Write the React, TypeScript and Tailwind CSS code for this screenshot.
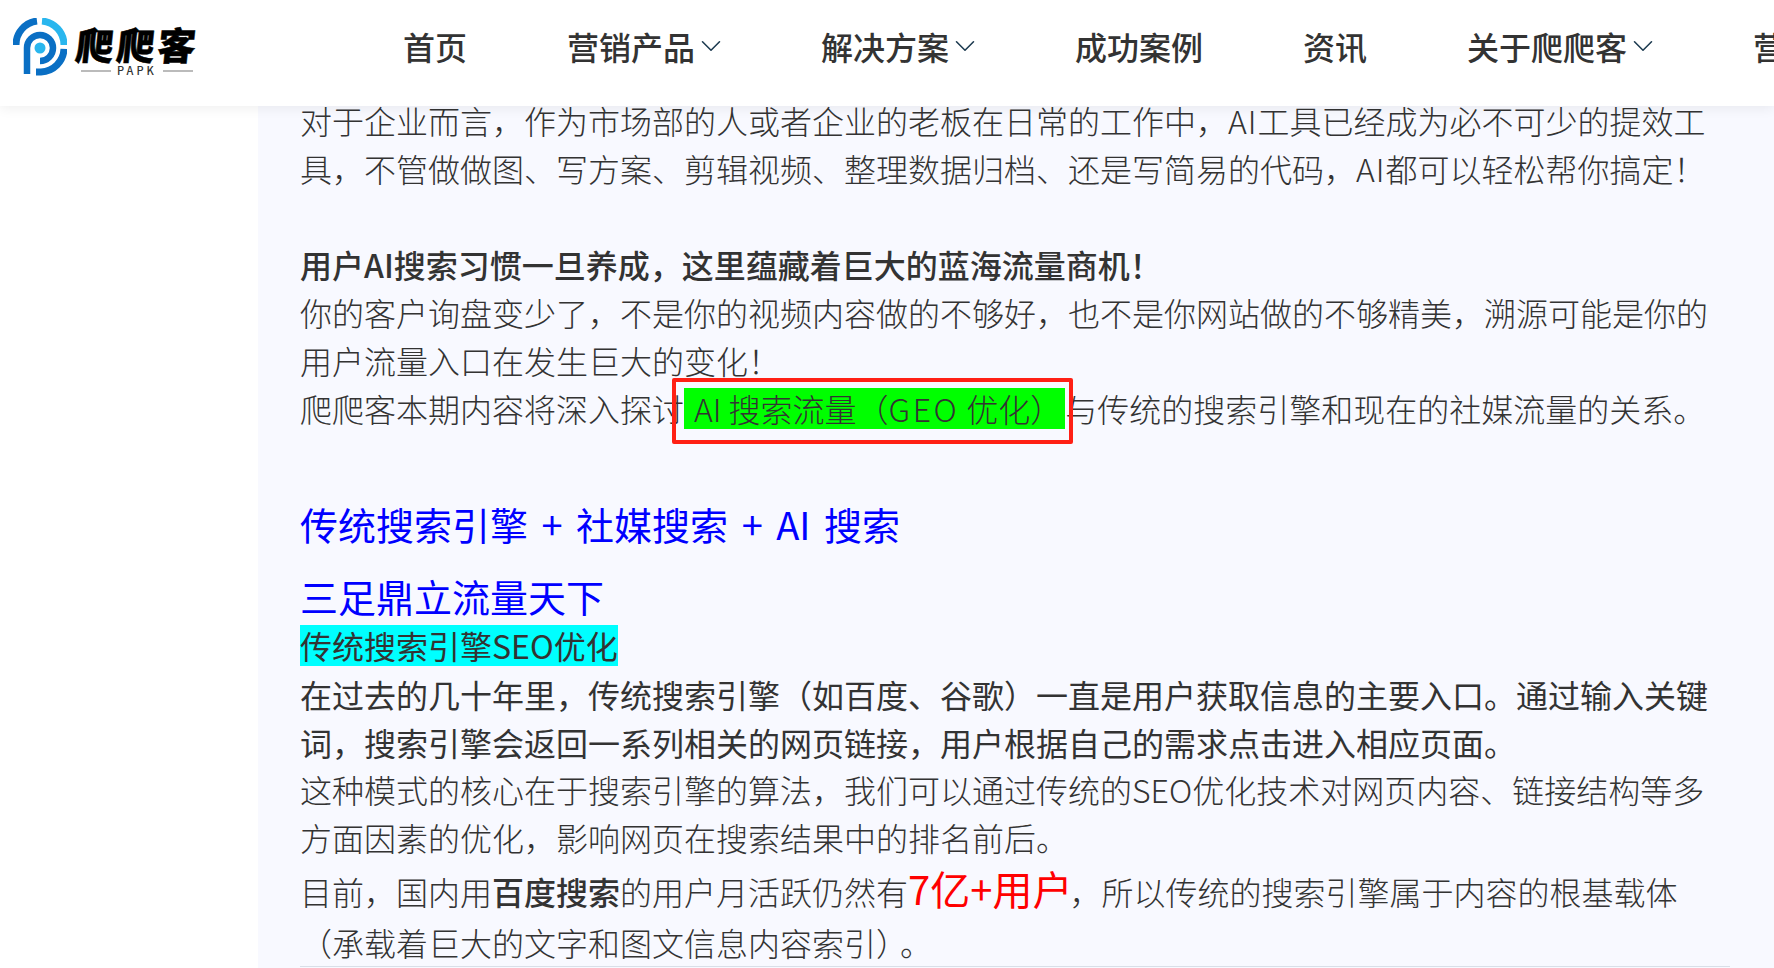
import React from 'react';
import { ChevronDown } from 'lucide-react';

const navItems = [
  { label: '首页', arrow: false },
  { label: '营销产品', arrow: true },
  { label: '解决方案', arrow: true },
  { label: '成功案例', arrow: false },
  { label: '资讯', arrow: false },
  { label: '关于爬爬客', arrow: true },
  { label: '营销产品', arrow: true },
];

const font = "font-['Noto_Sans_CJK_SC','Noto_Sans',sans-serif]";

const LogoMark = () => (
  <svg width="54" height="58" viewBox="0 0 54 58" fill="none">
    <path d="M3 27 A24 24 0 0 1 24 3" stroke="#0a6fc4" strokeWidth="7" />
    <path d="M29 3 A24 24 0 0 1 51 27" stroke="#29b6ee" strokeWidth="7" />
    <path d="M51 31 A24 24 0 0 1 28 54 L23 54" stroke="#0a6fc4" strokeWidth="7" />
    <path d="M14 56 L14 30 A13 13 0 1 1 27 43" stroke="#0a6fc4" strokeWidth="6.5" />
    <circle cx="27" cy="30" r="5.5" fill="#29b6ee" />
  </svg>
);

const Logo = () => (
  <div className="flex items-start gap-[9px] pl-[13px] pt-[18px]">
    <LogoMark />
    <div className="flex flex-col items-center pt-[7px]">
      <div className="w-[122px] -skew-x-6 whitespace-nowrap text-[38px] leading-[37px] font-black tracking-[3px] text-black [-webkit-text-stroke:0.5px_black]">
        爬爬客
      </div>
      <div className="mt-[3px] flex items-center gap-[6px] text-[11px] leading-[11px] font-medium tracking-[3px] text-[#333]">
        <span className="h-[2px] w-[30px] shrink-0 bg-[#bbb]" />
        PAPK
        <span className="h-[2px] w-[30px] shrink-0 bg-[#bbb]" />
      </div>
    </div>
  </div>
);

const Header = () => (
  <header className="relative z-10 flex h-[106px] shrink-0 bg-white shadow-[0_2px_12px_rgba(0,0,0,0.07)]">
    <div className="w-[403px] shrink-0">
      <Logo />
    </div>
    <nav className="flex h-[92px] items-center gap-[100px] whitespace-nowrap text-[32px] font-medium text-[#333]">
      {navItems.map((item, i) => (
        <div key={i} className="flex items-center">
          {item.label}
          {item.arrow && (
            <ChevronDown className="-mr-[7px] -ml-[1px] h-[34px] w-[34px] text-[#1c3a50]" strokeWidth={1.1} />
          )}
        </div>
      ))}
    </nav>
  </header>
);

const App: React.FC = () => {
  return (
    <div className={`flex h-[968px] w-[1774px] flex-col overflow-hidden bg-white ${font}`}>
      <Header />
      <div className="flex min-h-0 flex-1">
        <div className="w-[258px] shrink-0 bg-white" />
        <main className="min-w-0 flex-1 bg-[#f8f9ff] pl-[42px] text-[32px] leading-[48px] font-light whitespace-nowrap text-[#333]">
          <div className="-mt-[10px]">
            <p>
              对于企业而言，作为市场部的人或者企业的老板在日常的工作中，<span className="tracking-[1px]">AI</span>
              工具已经成为必不可少的提效工
            </p>
            <p>
              具，不管做做图、写方案、剪辑视频、整理数据归档、还是写简易的代码，<span className="tracking-[1px]">AI</span>
              都可以轻松帮你搞定！
            </p>
          </div>
          <p className="mt-[48px] font-medium">用户AI搜索习惯一旦养成，这里蕴藏着巨大的蓝海流量商机！</p>
          <p>你的客户询盘变少了，不是你的视频内容做的不够好，也不是你网站做的不够精美，溯源可能是你的</p>
          <p>用户流量入口在发生巨大的变化！</p>
          <p>
            爬爬客本期内容将深入探讨
            <span className="relative inline-block bg-[#00ff00] pr-[3px] pl-[10px] leading-[41px]">
              AI 搜索流量（<span className="tracking-[2.5px]">GEO</span> 优化）
              <span className="absolute -top-[10px] -right-[8px] -bottom-[15px] -left-[12px] rounded-[2px] border-[4px] border-[#ff2015]" />
            </span>
            与传统的搜索引擎和现在的社媒流量的关系。
          </p>
          <h2 className="mt-[62px] text-[38px] leading-[60px] font-normal text-[#0000ff] [word-spacing:5px]">
            传统搜索引擎 + 社媒搜索 + AI 搜索
          </h2>
          <h2 className="mt-[14px] text-[38px] leading-[56px] font-normal text-[#0000ff]">三足鼎立流量天下</h2>
          <p className="-mt-[3px] font-normal">
            <span className="inline-block bg-[#00ffff] leading-[41px]">传统搜索引擎SEO优化</span>
          </p>
          <p className="mt-[1px] font-normal">在过去的几十年里，传统搜索引擎（如百度、谷歌）一直是用户获取信息的主要入口。通过输入关键</p>
          <p className="font-normal">词，搜索引擎会返回一系列相关的网页链接，用户根据自己的需求点击进入相应页面。</p>
          <p className="-mt-[1px]">这种模式的核心在于搜索引擎的算法，我们可以通过传统的SEO优化技术对网页内容、链接结构等多</p>
          <p>方面因素的优化，影响网页在搜索结果中的排名前后。</p>
          <p className="mt-[3px]">
            目前，国内用<span className="font-medium">百度搜索</span>的用户月活跃仍然有
            <span className="text-[40px] leading-[48px] font-normal text-[#ff0000]">7亿+用户</span>
            <span className="-ml-[3px]">，所以传统的搜索引擎属于内容的根基载体</span>
          </p>
          <p className="mt-[3px]">
            （承载着巨大的文字和图文信息内容索引）<span className="ml-[8px]">。</span>
          </p>
          <div className="h-px w-[1430px] bg-[#d9dfe8]" />
        </main>
      </div>
    </div>
  );
};

export default App;
